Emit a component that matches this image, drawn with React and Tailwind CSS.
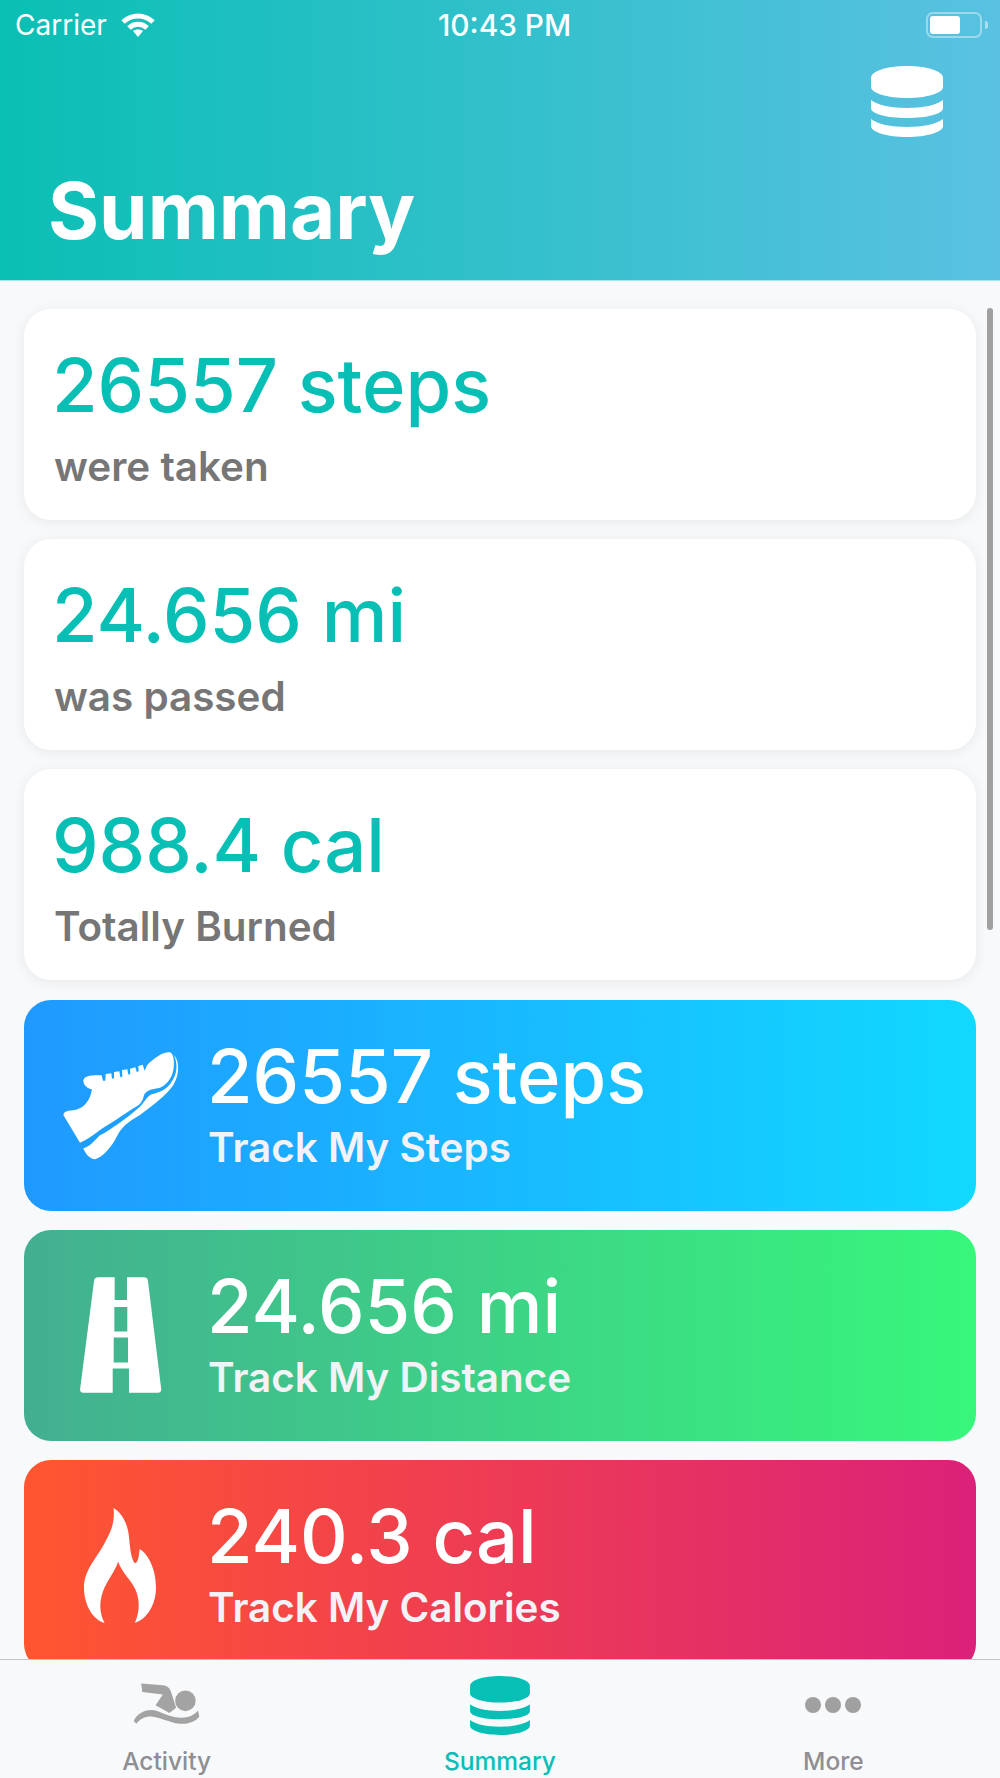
const FONT = 'font-["Inter",sans-serif]';

const stats = [
  { value: '26557 steps', label: 'were taken' },
  { value: '24.656 mi', label: 'was passed' },
  { value: '988.4 cal', label: 'Totally Burned' }
];

const trackers = [
  { value: '26557 steps', label: 'Track My Steps', bg: 'bg-linear-to-r/srgb from-[#2099ff] to-[#11d9ff]', icon: 'shoe' },
  { value: '24.656 mi', label: 'Track My Distance', bg: 'bg-linear-to-r/srgb from-[#43af91] to-[#37f77b]', icon: 'road' },
  { value: '240.3 cal', label: 'Track My Calories', bg: 'bg-linear-to-r/srgb from-[#ff5630] to-[#db2179]', icon: 'flame' }
];

const StackIcon = ({ className, fill }) => (
  <svg viewBox="0 0 72 71" className={className} fill={fill}>
    <path d="M0 12C0 5 16 0 36 0s36 5 36 12v9c0 6-16 11-36 11S0 27 0 21z" />
    <path d="M0 34c6 5 20 8 36 8s30-3 36-8v8c0 6-16 10-36 10S0 48 0 42z" />
    <path d="M0 53c6 5 20 8 36 8s30-3 36-8v7c0 6-16 11-36 11S0 66 0 60z" />
  </svg>
);

const ShoeIcon = () => (
  <svg viewBox="180 180 360 330" className="w-[120px] h-[110px]" fill="white">
    <path d="M190 375C192 363 205 362 225 360C250 355 270 335 276 298C262 295 250 285 250 272C252 258 270 255 305 256L309 272L316 272L317 252L334 250L336 266L342 265L342 246L358 244L361 262L367 260L366 240L382 238L385 254L391 252L390 236L406 232L410 246L416 244L415 228L428 224L434 242L441 226C460 205 490 185 510 187C520 190 525 215 520 240C515 265 500 285 480 293C460 297 440 298 432 315C428 335 420 345 400 355C370 375 340 395 300 420C280 435 260 450 240 458Z" />
    <path d="M250 475C270 470 285 450 300 436C330 420 380 385 420 350C435 335 440 320 455 313C480 305 500 300 515 275C530 255 535 225 522 195C540 215 538 255 520 285C500 315 460 345 420 375C385 395 365 410 350 440C335 470 310 500 285 508C270 508 255 490 250 475Z" />
  </svg>
);

const RoadIcon = () => (
  <svg viewBox="235 170 255 355" className="w-[85px] h-[118px]" fill="white">
    <path
      fillRule="evenodd"
      d="M295 174H433Q443 174 445 184L485 510Q486 521 475 521H250Q240 521 241 510L283 184Q285 174 295 174ZM345 174V242H382V174ZM344 263V337H383V263ZM342 355V430H385V355ZM339 448V521H388V448Z"
    />
  </svg>
);

const FlameIcon = () => (
  <svg viewBox="45 40 217 346" className="w-[72px] h-[115px]" fill="white">
    <path d="M134 40C160 55 178 90 181 130C184 165 188 195 198 206C208 205 210 185 213 163C240 180 262 225 262 280C262 330 235 375 198 386C212 355 215 320 200 285C185 255 160 235 148 202C135 240 108 265 98 305C90 335 95 365 107 386C75 378 45 335 45 280C45 225 85 190 110 140C130 105 138 75 134 40Z" />
  </svg>
);

const SwimIcon = () => (
  <svg viewBox="50 35 205 140" className="w-[68px] h-[47px] blur-[0.6px]" fill="#a3a3a3">
    <circle cx="208" cy="97" r="31" />
    <path d="M75 45L140 50Q158 52 164 68L180 118L160 134L118 110L140 78L78 70Z" />
    <path d="M52 158C65 130 95 118 125 128C155 140 180 152 215 146C228 143 238 135 246 126L250 144C238 160 215 168 190 166C160 162 130 146 105 144C85 144 70 152 60 166Z" />
  </svg>
);

const TrackerIcon = ({ name }) => {
  if (name === 'shoe') return <ShoeIcon />;
  if (name === 'road') return <RoadIcon />;
  return <FlameIcon />;
};

const App = () => {
  return (
    <div className={`${FONT} relative w-[1000px] h-[1778px] flex flex-col overflow-hidden bg-[#f8f9fb]`}>
      <header className="h-[281px] shrink-0 border-b border-[#a5e6ee] bg-linear-to-r/srgb from-[#0abfb4] to-[#5ac1e2] text-white">
        <div className="relative h-[50px] flex items-center justify-between pl-[15px] pr-3">
          <div className="flex items-center gap-[14px]">
            <span className="text-[28px] leading-[52px]">Carrier</span>
            <svg viewBox="0 0 34 24" className="w-[34px] h-[24px]" fill="none" stroke="white" strokeWidth="5">
              <path d="M2 9C11 1 23 1 32 9" />
              <path d="M8 15C13 10 21 10 26 15" />
              <path d="M17 24L12 18C15 16 19 16 22 18Z" fill="white" stroke="none" />
            </svg>
          </div>
          <span className="absolute left-[438px] text-[29.8px] font-medium leading-[52px]">10:43 PM</span>
          <div className="flex items-center gap-[3px]">
            <div className="w-[56px] h-[26px] rounded-[7px] border-2 border-white/40 p-[2px]">
              <div className="w-[30px] h-full rounded-[3px] bg-white" />
            </div>
            <div className="w-[3px] h-[8px] rounded-r-full bg-white/50" />
          </div>
        </div>
        <div className="flex justify-end pr-[57px] pt-[16px]">
          <StackIcon className="w-[72px] h-[71px]" fill="white" />
        </div>
        <h1 className="pl-[48px] mt-[28px] text-[78px] font-bold leading-[92px]">Summary</h1>
      </header>

      <main className="relative flex-1 min-h-0 overflow-hidden px-6 pt-[28px]">
        <div className="flex flex-col gap-[19.2px]">
          {stats.map((stat) => (
            <div key={stat.label} className="h-[211px] shrink-0 rounded-[27px] bg-white pl-[28px] pt-[30px] shadow-[0_2px_14px_rgba(0,0,0,0.07)]">
              <div className="text-[74px] font-[450] leading-[92px] text-[#07bfb5]">{stat.value}</div>
              <div className="text-[40.4px] font-semibold leading-[48px] text-[#767676] mt-[12px] ml-[2px]">{stat.label}</div>
            </div>
          ))}
          {trackers.map((tracker) => (
            <div key={tracker.label} className={`h-[211px] shrink-0 rounded-[27px] ${tracker.bg} flex text-white`}>
              <div className="w-[183px] shrink-0 flex items-center justify-center pl-[9px]">
                <TrackerIcon name={tracker.icon} />
              </div>
              <div className="pt-[30px]">
                <div className="text-[74px] font-[450] leading-[92px]">{tracker.value}</div>
                <div className="text-[40.4px] font-semibold leading-[48px] text-[#f2f2f7] mt-[2px] ml-[1px]">{tracker.label}</div>
              </div>
            </div>
          ))}
        </div>
        <div className="absolute right-[7px] top-[27px] w-[6px] h-[622px] rounded-full bg-[#a0a0a0]" />
      </main>

      <nav className="h-[119px] shrink-0 border-t border-[#c4c4c6] bg-[#f8f9fb] grid grid-cols-3">
        <div className="flex flex-col items-center text-[#8e8e93]">
          <div className="h-[90px] flex items-center justify-center pb-[4px]"><SwimIcon /></div>
          <span className="text-[24.5px] font-medium leading-[30px] -mt-[4px]">Activity</span>
        </div>
        <div className="flex flex-col items-center text-[#07bfb5]">
          <div className="h-[90px] flex items-center justify-center">
            <StackIcon className="w-[60px] h-[59px]" fill="#07bfb5" />
          </div>
          <span className="text-[24.5px] font-medium leading-[30px] -mt-[4px]">Summary</span>
        </div>
        <div className="flex flex-col items-center text-[#8e8e93]">
          <div className="h-[90px] flex items-center justify-center gap-[4px]">
            <div className="w-4 h-4 rounded-full bg-[#a0a0a0]" />
            <div className="w-4 h-4 rounded-full bg-[#a0a0a0]" />
            <div className="w-4 h-4 rounded-full bg-[#a0a0a0]" />
          </div>
          <span className="text-[24.5px] font-medium leading-[30px] -mt-[4px]">More</span>
        </div>
      </nav>
    </div>
  );
};

export default App;
